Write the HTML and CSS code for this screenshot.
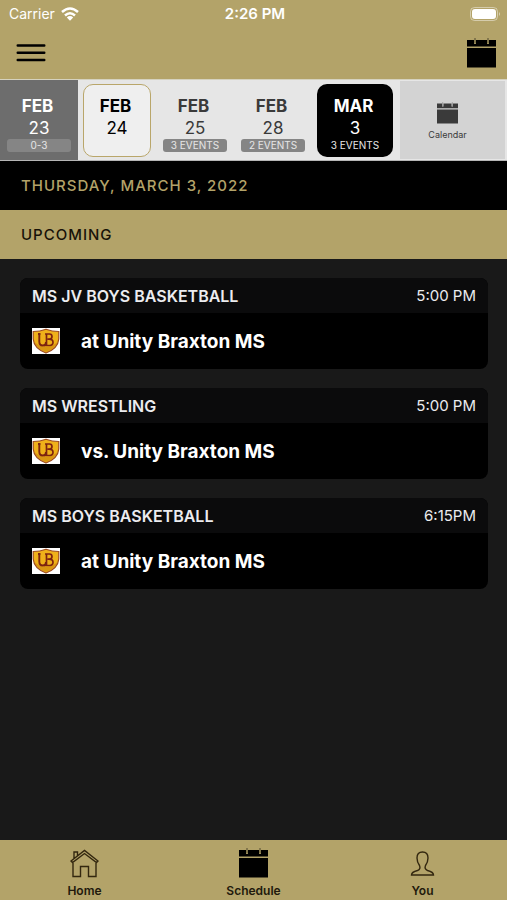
FILE: index.html
```html
<!DOCTYPE html>
<html lang="en">
<head>
<meta charset="utf-8">
<meta name="viewport" content="width=device-width, initial-scale=1">
<title>Schedule</title>
<link rel="stylesheet" href="styles.css">
</head>
<body>
<svg width="0" height="0" class="defs" aria-hidden="true">
  <symbol id="calendar" viewBox="0 0 29 30">
    <path d="M0 2H7V6H9V2H20V6H22V2H29V8.500H0ZM0 10H29V29.500H0Z"/>
    <path d="M7.500 0H8.500V5.500H7.500ZM20.500 0H21.500V5.500H20.500Z" opacity=".55"/>
  </symbol>
  <symbol id="shield" viewBox="0 0 28 26">
    <path fill="#fff" d="M0 0H28V26H0Z"/>
    <path fill="#efb11a" stroke="#9c4a20" stroke-width="1.200" d="M1.200 3.500Q8 3.500 14 1.200Q20 3.500 26.800 3.500V11Q26 20.500 14 25Q2 20.500 1.200 11Z"/>
    <path fill="#cf8a10" opacity=".7" d="M2.500 14Q5 21 14 24Q23 21 25.500 14Q20 19 14 19Q8 19 2.500 14Z"/>
    <path fill="none" stroke="#7d2310" stroke-width="1.900" d="M6 6H8.500M7.300 6V13.500Q7.300 17.500 10.700 17.500Q14 17.500 14 14"/>
    <path fill="none" stroke="#7d2310" stroke-width="1.700" d="M13 6H17.500Q20 6 20 8.500Q20 11.200 17 11.200H15.500M17 11.200Q21 11.200 21 14.300Q21 17.500 17.500 17.500H12M14.500 6V17"/>
  </symbol>
</svg>
<div class="app">
  <header class="top">
    <div class="status">
      <div class="carrier">Carrier
        <svg class="wifi" viewBox="0 0 18 14" aria-hidden="true"><path fill="none" stroke="#fff" stroke-width="2.500" d="M1 5Q9-2 17 5M4 8.500Q9 4 14 8.500"/><path fill="#fff" d="M5.800 10.400Q9 7.800 12.200 10.400L9 13.800Z"/></svg>
      </div>
      <div class="clock">2:26 PM</div>
      <svg class="battery" viewBox="0 0 31 14" aria-hidden="true"><rect x=".5" y=".5" width="27" height="13" rx="4" fill="none" stroke="#fff" stroke-opacity=".45"/><rect x="2" y="2" width="24" height="10" rx="3" fill="#fff"/><path d="M29 5Q31 7 29 9Z" fill="#fff" opacity=".5"/></svg>
    </div>
    <nav class="toolbar" aria-label="Main">
      <button class="icon-button" aria-label="Menu"><svg class="menu-icon" viewBox="0 0 29 18"><path stroke="#000" stroke-width="2.400" stroke-linecap="round" d="M1.200 1.500H27.800M1.200 8.700H27.800M1.200 16H27.800"/></svg></button>
      <button class="icon-button" aria-label="Open calendar"><svg class="calendar-icon"><use href="#calendar"/></svg></button>
    </nav>
  </header>
  <div class="days">
    <button class="day past"><span class="month">FEB</span><span class="date">23</span><span class="badge">0-3</span></button>
    <button class="day today"><span class="month">FEB</span><span class="date">24</span></button>
    <button class="day"><span class="month">FEB</span><span class="date">25</span><span class="badge">3 EVENTS</span></button>
    <button class="day"><span class="month">FEB</span><span class="date">28</span><span class="badge">2 EVENTS</span></button>
    <button class="day selected"><span class="month">MAR</span><span class="date">3</span><span class="badge">3 EVENTS</span></button>
    <button class="all-days"><svg class="small-calendar"><use href="#calendar"/></svg><span>Calendar</span></button>
  </div>
  <main>
    <h1 class="bar heading">THURSDAY, MARCH 3, 2022</h1>
    <h2 class="bar upcoming">UPCOMING</h2>
    <div class="events">
      <article class="event">
        <div class="event-head"><h3>MS JV BOYS BASKETBALL</h3><time>5:00 PM</time></div>
        <div class="event-body"><svg class="logo"><use href="#shield"/></svg><span>at Unity Braxton MS</span></div>
      </article>
      <article class="event">
        <div class="event-head"><h3>MS WRESTLING</h3><time>5:00 PM</time></div>
        <div class="event-body"><svg class="logo"><use href="#shield"/></svg><span>vs. Unity Braxton MS</span></div>
      </article>
      <article class="event">
        <div class="event-head"><h3>MS BOYS BASKETBALL</h3><time>6:15PM</time></div>
        <div class="event-body"><svg class="logo"><use href="#shield"/></svg><span>at Unity Braxton MS</span></div>
      </article>
    </div>
  </main>
  <nav class="tabs" aria-label="Sections">
    <a href="#home"><svg class="tab-icon line" viewBox="0 0 29 30"><path d="M3 14V28.500H10.500V18.500H18.500V28.500H26V14M1 13L14.500 2.500L28 13L26.500 14.500L14.500 5.500L2.500 14.500ZM4 10.500V4H7.500V7.500"/></svg>Home</a>
    <a href="#schedule"><svg class="tab-icon"><use href="#calendar"/></svg>Schedule</a>
    <a href="#you"><svg class="tab-icon line" viewBox="0 0 29 30"><path d="M14.500 4Q9 4 9 10Q9 14 11.500 17.500Q13 21 9.500 22.500Q3.500 24 3.500 27H25.500Q25.500 24 19.500 22.500Q16 21 17.500 17.500Q20 14 20 10Q20 4 14.500 4Z"/></svg>You</a>
  </nav>
</div>
</body>
</html>
```

FILE: styles.css
```css
* {
  box-sizing: border-box;
}

body {
  margin: 0;
  background: #191919;
  color: #fff;
  font-family: Inter, "Liberation Sans", sans-serif;
}

button {
  margin: 0;
  padding: 0;
  border: 0;
  background: none;
  color: inherit;
  font: inherit;
}

h1,
h2,
h3 {
  margin: 0;
}

svg {
  display: block;
}

.defs {
  position: absolute;
}

.app {
  display: flex;
  flex-direction: column;
  min-height: 100vh;
}

.top {
  background: #b3a369;
}

.status {
  display: grid;
  grid-template-columns: 1fr auto 1fr;
  align-items: center;
  height: 27px;
  padding: 0 6px 0 9px;
  font-size: 14px;
}

.carrier {
  display: flex;
  align-items: center;
  gap: 6px;
}

.clock {
  font-size: 15px;
  font-weight: 600;
}

.wifi {
  width: 18px;
  height: 14px;
}

.battery {
  justify-self: end;
  width: 31px;
  height: 14px;
}

.toolbar {
  display: flex;
  justify-content: space-between;
  align-items: center;
  height: 52px;
  padding: 0 11px 0 16px;
}

.menu-icon {
  width: 30px;
  height: 18px;
}

.calendar-icon {
  width: 29px;
  height: 30px;
}

.days {
  display: grid;
  grid-template-columns: 78fr 78fr 78fr 78fr 86fr 109fr;
  height: 82px;
  background: #e6e6e6;
  border-top: 1px solid #d5d2bf;
  border-bottom: 1px solid #b5b5b5;
  color: #3a3a3a;
}

.day {
  display: flex;
  flex-direction: column;
  align-items: center;
  padding-top: 15px;
}

.month {
  padding-right: 3px;
  font-size: 17px;
  font-weight: 700;
  line-height: 22px;
}

.date {
  font-size: 17px;
  line-height: 22px;
}

.badge {
  width: 64px;
  border-radius: 3px;
  background: #858585;
  color: #e6e6e6;
  font-size: 10px;
  line-height: 13px;
}

.past {
  background: #6d6d6d;
  color: #fff;
}

.today {
  margin: 4px 5px 3px;
  padding-top: 10px;
  border: 1px solid #b9a66a;
  border-radius: 10px;
  background: #efefef;
  color: #000;
}

.selected {
  margin: 4px 5px 3px;
  padding-top: 11px;
  border-radius: 10px;
  background: #000;
  color: #fff;
}

.selected .badge {
  width: auto;
  background: none;
}

.all-days {
  display: flex;
  flex-direction: column;
  align-items: center;
  justify-content: center;
  gap: 5px;
  margin: 1px 2px;
  padding: 3px 10px 0 0;
  background: #d3d3d3;
  font-size: 9px;
  line-height: 12px;
}

.small-calendar {
  width: 21px;
  height: 22px;
  fill: #3a3a3a;
}

main {
  flex: 1;
}

.bar {
  height: 49px;
  padding-left: 21px;
  background: #000;
  color: #b3a369;
  font-size: 15px;
  font-weight: 500;
  line-height: 49px;
  letter-spacing: 1px;
}

.upcoming {
  background: #b3a369;
  color: #181208;
}

.events {
  display: grid;
  gap: 19px;
  padding: 19px 19px 19px 20px;
}

.event {
  overflow: hidden;
  border-radius: 8px;
  background: #000;
}

.event-head {
  display: flex;
  align-items: center;
  justify-content: space-between;
  height: 35px;
  padding: 0 12px;
  background: #0b0b0c;
  color: #ececef;
  font-size: 15px;
}

.event-head h3 {
  font-size: 16px;
  font-weight: 600;
}

.event-body {
  display: flex;
  align-items: center;
  gap: 21px;
  height: 56px;
  padding: 0 12px;
  font-size: 19px;
  font-weight: 700;
}

.logo {
  width: 28px;
  height: 26px;
}

.tabs {
  display: grid;
  grid-template-columns: repeat(3, 1fr);
  height: 60px;
  background: #b3a369;
}

.tabs a {
  display: flex;
  flex-direction: column;
  align-items: center;
  gap: 4px;
  padding-top: 8px;
  color: #21190c;
  font-size: 12px;
  font-weight: 600;
  line-height: 18px;
  text-decoration: none;
}

.tab-icon {
  width: 29px;
  height: 30px;
  fill: #000;
}

.line {
  fill: none;
  stroke: #33270f;
  stroke-width: 1.4px;
}
```
